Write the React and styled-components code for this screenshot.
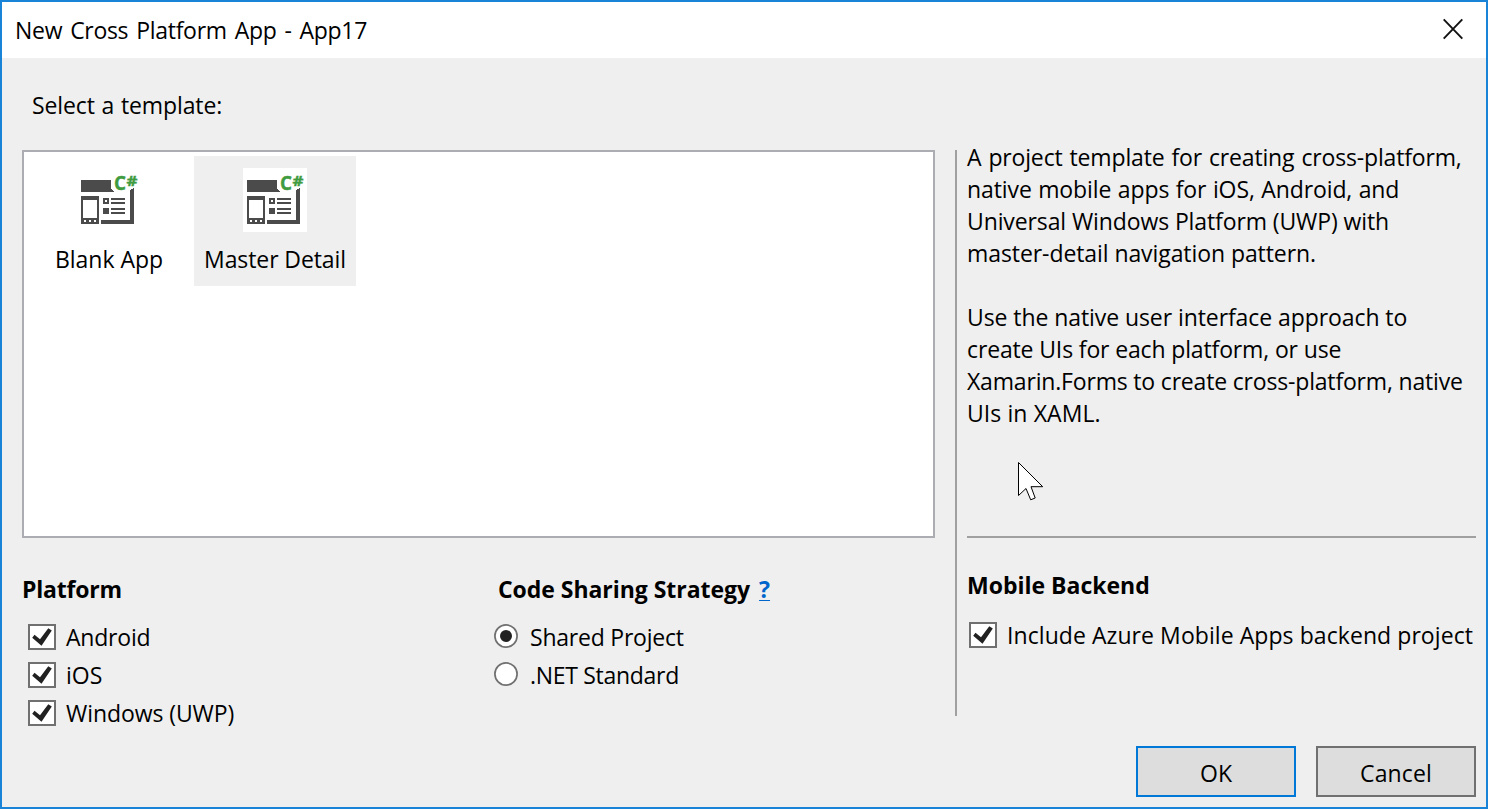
import React from "react";
import styled, { createGlobalStyle } from "styled-components";

const GlobalStyle = createGlobalStyle`
  * { box-sizing: border-box; }
  body { margin: 0; background: #f0f0f0; }
`;

const Dialog = styled.div`
  position: relative;
  display: flex;
  flex-direction: column;
  width: 1488px;
  height: 809px;
  border: 2px solid #1883d7;
  background: #efefef;
  color: #000;
  font: 23px/32px "Open Sans", "Noto Sans", sans-serif;
  white-space: nowrap;
  overflow: hidden;
`;

const TitleBar = styled.header`
  display: flex;
  align-items: center;
  justify-content: space-between;
  flex: none;
  height: 56px;
  padding: 0 22px 0 13px;
  background: #fff;
`;

const CloseButton = styled.button`
  display: flex;
  padding: 0;
  border: 0;
  background: none;
  margin-bottom: 2px;
`;

const Text = styled.span`
  letter-spacing: ${(p) => p.$spacing || 0}px;
  word-spacing: ${(p) => p.$words || 0}px;
`;

const Content = styled.main`
  display: flex;
  flex: none;
  height: 658px;
`;

const LeftPane = styled.section`
  display: flex;
  flex-direction: column;
  width: 933px;
  padding-left: 20px;
`;

const Prompt = styled.div`
  flex: none;
  height: 92px;
  padding: 31px 0 0 10px;
`;

const TemplateList = styled.div`
  display: flex;
  flex: none;
  align-items: flex-start;
  gap: 4px;
  height: 388px;
  padding: 4px;
  border: 2px solid #abadb3;
  background: #fff;
`;

const TemplateItem = styled.div`
  display: flex;
  flex-direction: column;
  align-items: center;
  gap: 11px;
  width: 162px;
  height: 130px;
  padding-top: 12px;
  background: ${(p) => (p.$selected ? "#efefef" : "transparent")};
`;

const TemplateArt = styled.svg`
  display: block;
  background: #fff;
  text {
    font-family: "Open Sans", sans-serif;
    font-weight: 700;
    fill: #3f9b3f;
    stroke: #3f9b3f;
  }
`;

const Settings = styled.div`
  display: flex;
  padding-top: 35px;
`;

const Group = styled.div`
  width: ${(p) => p.$width || "auto"};
`;

const Heading = styled.h2`
  display: flex;
  gap: 9px;
  margin: 0 0 ${(p) => p.$gap}px;
  font: inherit;
  font-weight: 700;
`;

const HelpLink = styled.a`
  color: #0066cc;
  text-decoration: underline 1px;
  text-underline-offset: 2px;
  text-decoration-skip-ink: none;
`;

const Option = styled.label`
  display: flex;
  align-items: center;
  gap: ${(p) => p.$gap || 10}px;
  height: 38px;
  margin-left: ${(p) => p.$indent}px;
`;

const CheckBox = styled.span`
  display: flex;
  flex: none;
  width: 28px;
  height: 26px;
  border: 2px solid #707070;
  background: #fff;
`;

const RadioMark = styled.svg`
  display: block;
  flex: none;
  margin-bottom: 2px;
`;

const Divider = styled.div`
  width: 2px;
  margin: 92px 10px 0 20px;
  background: #a0a0a0;
`;

const RightPane = styled.section`
  width: 509px;
  padding-top: 83px;
`;

const Description = styled.div`
  display: flex;
  flex-direction: column;
  gap: 32px;
  height: 395px;
`;

const Paragraph = styled.p`
  display: flex;
  flex-direction: column;
  margin: 0;
`;

const Rule = styled.div`
  height: 2px;
  margin-bottom: 31px;
  background: #a0a0a0;
`;

const Footer = styled.footer`
  display: flex;
  justify-content: flex-end;
  gap: 20px;
  padding: 30px 10px 0 0;
`;

const Button = styled.button`
  width: 160px;
  height: 51px;
  padding: 3px 0 0;
  border: 2px solid ${(p) => (p.$primary ? "#0078d7" : "#707070")};
  background: #ddd;
  color: #000;
  font: inherit;
`;

const Pointer = styled.svg`
  position: absolute;
  left: 1014px;
  top: 458px;
`;

function TemplateIcon() {
  return (
    <TemplateArt width="64" height="64" viewBox="0 0 64 64">
      <g fill="#4b4b4b" shapeRendering="crispEdges">
        <path d="M4 12H34V21L38 24H4Z" />
        <path fillRule="evenodd" d="M4 28H22V56H4ZM6 32V50H20V32ZM7 52V54H9V52ZM12 52V54H14V52ZM17 52V54H19V52Z" />
        <path fillRule="evenodd" d="M26 30H32V36H26ZM28 32V34H30V32Z" />
        <path d="M26 40H32V46H26ZM34 30H48V32H34ZM34 34H48V36H34ZM34 40H48V42H34ZM34 44H48V46H34Z" />
        <path d="M52.5 23L56.5 20V56H24V52H52.5Z" />
      </g>
      <text x="37" y="22" fontSize="19.5" textLength="12" lengthAdjust="spacingAndGlyphs" strokeWidth=".4">C</text>
      <text x="49.5" y="18.2" fontSize="14.5" textLength="11" lengthAdjust="spacingAndGlyphs" strokeWidth=".4">#</text>
    </TemplateArt>
  );
}

function Template({ label, spacing, selected }) {
  return (
    <TemplateItem $selected={selected}>
      <TemplateIcon />
      <Text $spacing={spacing}>{label}</Text>
    </TemplateItem>
  );
}

function CheckOption({ label, spacing, indent }) {
  return (
    <Option $indent={indent}>
      <CheckBox>
        <svg width="24" height="22" viewBox="2 2 24 22">
          <path d="M4.2 13.7 6.5 10.7 12 15.2 20.3 4.3 23.8 6.4 13.5 21.8Z" fill="#212121" />
        </svg>
      </CheckBox>
      <Text $spacing={spacing}>{label}</Text>
    </Option>
  );
}

function RadioOption({ label, spacing, checked }) {
  return (
    <Option $indent={-4} $gap={12}>
      <RadioMark width="24" height="24">
        <circle cx="12" cy="12" r="11.1" fill="#fff" stroke="#707070" strokeWidth="1.7" />
        {checked && <circle cx="12" cy="12" r="6" fill="#212121" />}
      </RadioMark>
      <Text $spacing={spacing}>{label}</Text>
    </Option>
  );
}

const description = [
  [
    ["A project template for creating cross-platform,", -0.16, 1.2],
    ["native mobile apps for iOS, Android, and", -0.1, 0.6],
    ["Universal Windows Platform (UWP) with", -0.108, 0],
    ["master-detail navigation pattern.", -0.079, 0],
  ],
  [
    ["Use the native user interface approach to", -0.076, 0],
    ["create UIs for each platform, or use", -0.14, 0],
    ["Xamarin.Forms to create cross-platform, native", -0.179, 0],
    ["UIs in XAML.", 0.088, 0],
  ],
];

export default function App() {
  return (
    <Dialog>
      <GlobalStyle />
      <TitleBar>
        <Text $spacing={-0.3} $words={2.3}>New Cross Platform App - App17</Text>
        <CloseButton aria-label="Close">
          <svg width="22" height="22" viewBox="0 0 22 22">
            <path d="M1.7 1.4 20.3 20.6M20.3 1.4 1.7 20.6" stroke="#111" strokeWidth="1.9" />
          </svg>
        </CloseButton>
      </TitleBar>
      <Content>
        <LeftPane>
          <Prompt>
            <Text $spacing={-0.1} $words={0.8}>Select a template:</Text>
          </Prompt>
          <TemplateList>
            <Template label="Blank App" spacing={-0.04} />
            <Template label="Master Detail" spacing={-0.1} selected />
          </TemplateList>
          <Settings>
            <Group $width="476px">
              <Heading $gap={13}>
                <Text $spacing={-0.22}>Platform</Text>
              </Heading>
              <CheckOption indent={6} label="Android" spacing={-0.2} />
              <CheckOption indent={6} label="iOS" />
              <CheckOption indent={6} label="Windows (UWP)" spacing={-0.08} />
            </Group>
            <Group>
              <Heading $gap={13}>
                <Text $spacing={-0.04}>Code Sharing Strategy</Text>
                <HelpLink>?</HelpLink>
              </Heading>
              <RadioOption label="Shared Project" spacing={-0.22} checked />
              <RadioOption label=".NET Standard" spacing={-0.3} />
            </Group>
          </Settings>
        </LeftPane>
        <Divider />
        <RightPane>
          <Description>
            {description.map((lines, i) => (
              <Paragraph key={i}>
                {lines.map(([line, spacing, words]) => (
                  <Text key={line} $spacing={spacing} $words={words}>{line}</Text>
                ))}
              </Paragraph>
            ))}
          </Description>
          <Rule />
          <Heading $gap={15}>
            <Text>Mobile Backend</Text>
          </Heading>
          <CheckOption indent={2} label="Include Azure Mobile Apps backend project" spacing={0.07} />
        </RightPane>
      </Content>
      <Footer>
        <Button $primary>OK</Button>
        <Button>
          <Text $spacing={0.12}>Cancel</Text>
        </Button>
      </Footer>
      <Pointer width="32" height="44" viewBox="-2 -2 32 44">
        <path d="M.5.5V33.5L8 26.5 12.7 37.8 17.2 36 13 24.7H24.7Z" fill="#fff" stroke="#000" strokeWidth="1" />
      </Pointer>
    </Dialog>
  );
}
